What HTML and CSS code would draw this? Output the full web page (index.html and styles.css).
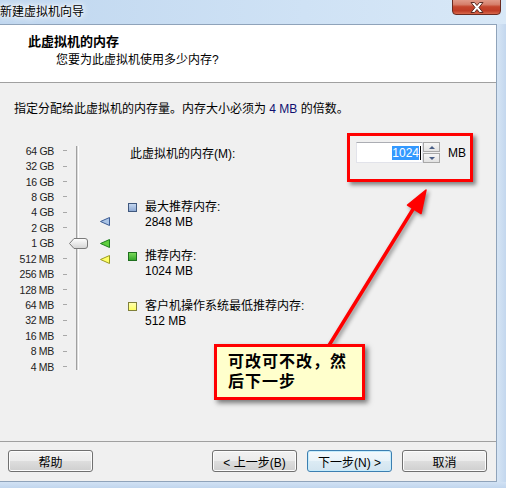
FILE: index.html
```html
<!doctype html>
<html>
<head>
<meta charset="utf-8">
<title>新建虚拟机向导</title>
<link rel="stylesheet" href="styles.css">
</head>

<body>
<div class="window">
	<div class="titlebar">
		<span class="title">新建虚拟机向导</span>
		<div class="close">
			<svg width="14" height="11" viewBox="0 0 14 11"><path d="M1 0.5 H4.5 L7 3.5 L9.5 0.5 H13 L9 5.5 L13 10.5 H9.5 L7 7.5 L4.5 10.5 H1 L5 5.5 Z" fill="#fff" stroke="#5a2a22" stroke-width="1"/></svg>
		</div>
	</div>
	<div class="frame">
		<div class="client">
			<div class="header">
				<h1>此虚拟机的内存</h1>
				<p>您要为此虚拟机使用多少内存?</p>
			</div>
			<div class="body">
				<p class="intro">指定分配给此虚拟机的内存量。内存大小必须为 <span class="num">4 MB</span> 的倍数。</p>
				<div class="main">
					<div class="scale">
						<ul class="labels">
							<li><span>64 GB</span><i></i></li>
							<li><span>32 GB</span><i></i></li>
							<li><span>16 GB</span><i></i></li>
							<li><span>8 GB</span><i></i></li>
							<li><span>4 GB</span><i></i></li>
							<li><span>2 GB</span><i></i></li>
							<li class="cur"><span>1 GB</span><i></i></li>
							<li><span>512 MB</span><i></i></li>
							<li><span>256 MB</span><i></i></li>
							<li><span>128 MB</span><i></i></li>
							<li><span>64 MB</span><i></i></li>
							<li><span>32 MB</span><i></i></li>
							<li><span>16 MB</span><i></i></li>
							<li><span>8 MB</span><i></i></li>
							<li><span>4 MB</span><i></i></li>
						</ul>
						<div class="track"></div>
						<svg class="thumb" width="19" height="11" viewBox="0 0 19 11">
							<defs><linearGradient id="tg" x1="0" y1="0" x2="0" y2="1"><stop offset="0" stop-color="#ffffff"/><stop offset="1" stop-color="#d4d4d4"/></linearGradient></defs>
							<path d="M0.5 5.5 L5 0.5 H16 Q18.5 0.5 18.5 3 V8 Q18.5 10.5 16 10.5 H5 Z" fill="url(#tg)" stroke="#7a7a7a"/>
						</svg>
						<svg class="mark mark_max" width="10" height="9" viewBox="0 0 10 9"><path d="M0.5 4.5 L9.5 0.5 V8.5 Z" fill="#a9c3e6" stroke="#3c5c94"/></svg>
						<svg class="mark mark_rec" width="10" height="9" viewBox="0 0 10 9"><path d="M0.5 4.5 L9.5 0.5 V8.5 Z" fill="#5fcf3f" stroke="#1f7f1f"/></svg>
						<svg class="mark mark_min" width="10" height="9" viewBox="0 0 10 9"><path d="M0.5 4.5 L9.5 0.5 V8.5 Z" fill="#ffff66" stroke="#9a9a20"/></svg>
					</div>
					<div class="panel">
						<div class="mem_row">
							<label>此虚拟机的内存(M):</label>
							<div class="spin_box">
								<div class="spin_input"><span class="sel">1024</span><span class="caret"></span></div>
								<div class="spin_btns">
									<div class="spin_up"><b></b></div>
									<div class="spin_down"><b></b></div>
								</div>
								<span class="unit">MB</span>
							</div>
						</div>
						<div class="legend">
							<div class="item">
								<i class="sq sq_blue"></i>
								<div><p>最大推荐内存:</p><p>2848 MB</p></div>
							</div>
							<div class="item">
								<i class="sq sq_green"></i>
								<div><p>推荐内存:</p><p>1024 MB</p></div>
							</div>
							<div class="item">
								<i class="sq sq_yellow"></i>
								<div><p>客户机操作系统最低推荐内存:</p><p>512 MB</p></div>
							</div>
						</div>
					</div>
				</div>
			</div>
			<div class="footer">
				<button class="btn">帮助</button>
				<div class="btn_group">
					<button class="btn">&lt; 上一步(B)</button>
					<button class="btn btn_default">下一步(N) &gt;</button>
					<button class="btn">取消</button>
				</div>
			</div>
		</div>
		<div class="side"></div>
	</div>
	<div class="bottom"></div>

	<!-- annotations -->
	<div class="hl_box"></div>
	<svg class="arrow" width="506" height="488" viewBox="0 0 506 488">
		<line x1="328" y1="347" x2="415" y2="206" stroke="#ff0000" stroke-width="3.5" stroke-linecap="round"/>
		<path d="M426 190 L407.5 205 L421 213.5 Z" fill="#ff0000" stroke="#ff0000" stroke-width="1.5" stroke-linejoin="round"/>
	</svg>
	<div class="note">可改可不改，然后下一步</div>
</div>
</body>
</html>
```

FILE: styles.css
```css
*{margin:0; padding:0;}
body{font-family:"Liberation Sans","Noto Sans CJK SC",sans-serif; font-size:12px; color:#000; background:#fff;}
ul{list-style:none;}

.window{position:relative; width:506px; height:488px; overflow:hidden; display:flex; flex-direction:column;}

.titlebar{height:24px; flex:none; position:relative; background:linear-gradient(to right,#c0d7ef,#cfe2f5 60%,#d8e8f7);}
.titlebar .title{display:block; line-height:24px; padding-left:0; font-size:12px; text-shadow:0 0 8px #fff,0 0 6px #fff,0 0 3px #fff;}
.titlebar .close{position:absolute; left:452px; top:-3px; width:49px; height:17px; border:1px solid #6a2a20; border-radius:0 0 4px 4px; background:linear-gradient(#e6a595 0%,#d6806c 40%,#c4452d 55%,#bf3c26 80%,#d8694d 100%); display:flex; align-items:center; justify-content:center; padding-top:2px; box-sizing:border-box; height:18px;}
.titlebar .close svg{display:block;}

.frame{flex:1; display:flex;}
.client{width:497px; display:flex; flex-direction:column; border-top:1px solid #8fa3ba; border-right:1px solid #8fa3ba; border-bottom:1px solid #8fa3ba; background:#f0f0f0; box-sizing:border-box;}
.side{flex:1; background:linear-gradient(to right,#d6e5f5,#c3d7ee);}
.bottom{height:6px; flex:none; background:linear-gradient(#d2e2f4,#c1d6ee);}

.header{height:57px; background:#fff; border-bottom:1px solid #a0a0a0; flex:none;}
.header h1{font-size:13px; font-weight:bold; line-height:16px; padding:9px 0 0 28px;}
.header p{line-height:16px; padding:2px 0 0 56px;}

.body{flex:1;}
.intro{line-height:16px; margin-top:18px; padding-left:14px;}
.intro .num{color:#101070;}

.main{display:flex; margin-top:25px;}
.scale{position:relative; width:128px; height:232px; display:flex; align-items:flex-start;}
.labels{padding-top:1px; width:67px;}
.labels li{height:15.43px; display:flex; align-items:center; font-size:10.5px; letter-spacing:-0.3px; color:#222;}
.labels li span{width:54px; text-align:right;}
.labels li i{width:4px; height:1px; background:#a8a8a8; margin-left:9px;}
.labels li.cur i{visibility:hidden;}
.track{width:1px; height:224px; margin:4px 0 0 9px; border-left:1px solid #a0a0a0; border-right:1px solid #fff; background:#dcdcdc;}
.thumb{position:absolute; left:69px; top:96px;}
.mark{position:absolute; left:100px;}
.mark_max{top:75px;}
.mark_rec{top:97px;}
.mark_min{top:113px;}

.panel{width:336px;}
.mem_row{height:21px; display:flex; align-items:center; padding-left:2px;}
.spin_box{margin-left:auto; display:flex; align-items:center;}
.spin_input{width:67px; height:21px; box-sizing:border-box; background:#fff; border:1px solid #e2e3ea; border-top-color:#abadb3; display:flex; align-items:center; justify-content:flex-end; padding-right:1px;}
.spin_input .sel{background:#3399ff; color:#fff; line-height:14px; font-size:12px;}
.spin_input .caret{width:1px; height:14px; background:#000; margin-left:1px;}
.spin_btns{width:17px; height:21px; display:flex; flex-direction:column; gap:1px;}
.spin_btns div{flex:1; border:1px solid #a8a8a8; background:linear-gradient(#f6f6f6,#e2e2e2); display:flex; align-items:center; justify-content:center;}
.spin_up b{width:0; height:0; border-left:3px solid transparent; border-right:3px solid transparent; border-bottom:3px solid #4a5f86;}
.spin_down b{width:0; height:0; border-left:3px solid transparent; border-right:3px solid transparent; border-top:3px solid #4a5f86;}
.unit{margin-left:8px; width:16px;}

.legend{margin-top:36.5px; display:flex; flex-direction:column; gap:19.5px;}
.legend .item{display:flex; align-items:flex-start;}
.legend p{line-height:15px;}
.sq{width:9px; height:9px; box-sizing:border-box; margin:3px 8px 0 0; flex:none;}
.sq_blue{border:1px solid #40587e; background:linear-gradient(#c4d6ef,#8eaad4);}
.sq_green{border:1px solid #1f6f1f; background:linear-gradient(#7ad85a,#36a82a);}
.sq_yellow{border:1px solid #80803a; background:linear-gradient(#ffffb0,#ffff60);}

.footer{height:40px; flex:none; border-top:1px solid #a0a0a0; box-sizing:border-box; display:flex; align-items:flex-start; padding:8px 9px 0 8px;}
.btn_group{margin-left:auto; display:flex; gap:10px;}
.btn_group .btn:first-child{margin-right:0;}
.btn{width:85px; height:22px; border:1px solid #707070; border-radius:3px; background:linear-gradient(#f2f2f2 0%,#ebebeb 48%,#dddddd 52%,#cfcfcf 100%); font-family:"Liberation Sans","Noto Sans CJK SC",sans-serif; font-size:12px; color:#000; box-shadow:inset 0 0 0 1px #fcfcfc;}
.btn_default{border-color:#3c7fb1; box-shadow:inset 0 0 0 1px #c6ecfc; background:linear-gradient(#f4f9fc 0%,#e9f3f9 48%,#dcebf4 52%,#d2e4ef 100%);}

.hl_box{position:absolute; left:347px; top:133px; width:126px; height:49px; box-sizing:border-box; border:3px solid #ff0000; box-shadow:3px 3px 4px rgba(0,0,0,0.45);}
.arrow{position:absolute; left:0; top:0; pointer-events:none; filter:drop-shadow(2px 2px 2px rgba(0,0,0,0.45));}
.note{position:absolute; left:214px; top:344px; width:151px; height:56px; box-sizing:border-box; border:3px solid #ff0000; background:#ffffcc; box-shadow:3px 3px 5px rgba(0,0,0,0.5); padding:5px 9px 0 11px; font-size:16px; font-weight:bold; line-height:20px; letter-spacing:1px;}
```
